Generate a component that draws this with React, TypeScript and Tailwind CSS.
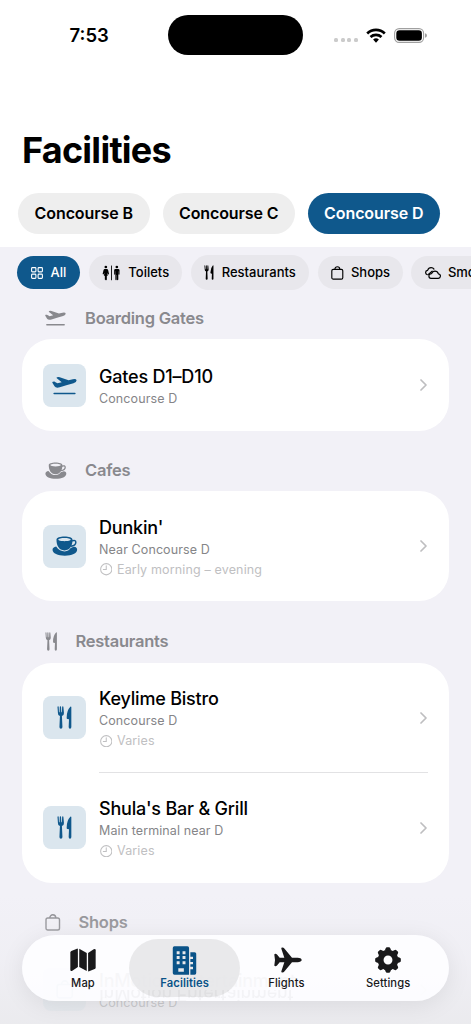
import React from "react";
import { clsx } from "clsx";

type IconProps = { className?: string };

const GridIcon = ({ className }: IconProps) => (
  <svg viewBox="0 0 12 12" className={className} fill="none" stroke="currentColor" strokeWidth="1.1">
    <rect x="0.6" y="0.6" width="4.3" height="4.3" rx="0.8" />
    <rect x="7.1" y="0.6" width="4.3" height="4.3" rx="0.8" />
    <rect x="0.6" y="7.1" width="4.3" height="4.3" rx="0.8" />
    <rect x="7.1" y="7.1" width="4.3" height="4.3" rx="0.8" />
  </svg>
);

const ToiletIcon = ({ className }: IconProps) => (
  <svg viewBox="308 434 54 48" className={className} fill="currentColor">
    <circle cx="319.500" cy="440" r="4" />
    <path d="M316.500 446h6q3 0 4 4l2.500 10q0 3-3 2l-2.500-5 2 9h-3v11q0 3-1.500 3t-1.500-3q0 3-1.500 3t-1.500-3v-11h-3l2-9-2.500 5q-3 1-3-2l2.500-10q1-4 4-4z" />
    <rect x="335.200" y="435" width="2.600" height="45" rx="1.300" />
    <circle cx="352.500" cy="440" r="4" />
    <path d="M348.500 446h8q4 0 4 4v11q0 2-1.500 2t-1.500-2v-8h-.6v24q0 3-2 3t-2-3v-13h-.8v13q0 3-2 3t-2-3v-24h-.6v8q0 2-1.500 2t-1.500-2v-11q0-4 4-4z" />
  </svg>
);

const ForkKnifeIcon = ({ className }: IconProps) => (
  <svg viewBox="171 259 45 69" className={className} fill="currentColor">
    <path d="M172.500 263q0-3 1.800-3t1.900 3l.8 15h1.800l.5-15q0-3 2-3t2 3l.5 15h1.800l.8-15q.2-3 2-3t1.900 3l1.500 17q.5 7-6 9l1.500 33q0 5-4.500 5t-4.500-5l1.500-33q-6.500-2-6-9z" />
    <path d="M211 261q3-2 3 2v59q0 5-4 5t-4-5l1-23-5-1q-2-.5-2-4 0-22 11-33z" />
  </svg>
);

const BagIcon = ({ className }: IconProps) => (
  <svg viewBox="0 0 16 17" className={className} fill="none" stroke="currentColor" strokeWidth="1.400">
    <rect x="1" y="4" width="13.500" height="12" rx="1.800" />
    <path d="M4.800 4a3 3.200 0 0 1 6 0" />
  </svg>
);

const SmokeIcon = ({ className }: IconProps) => (
  <svg viewBox="0 0 16 12" className={className} fill="none" stroke="currentColor" strokeWidth="1.200" strokeLinecap="round" strokeLinejoin="round">
    <path d="M6 11.300h7a2.200 2.200 0 0 0 .4-4.400C12.800 5 11.600 4.100 10 4.100c-1.700 0-2.900 1-3.400 2.500C5 6.500 3.900 7.600 3.900 9c0 1.300.9 2.300 2.100 2.300z" />
    <path d="M2.300 7.700C1.200 7.300.6 6.500.6 5.500c0-1.200.9-2 2-2.100C3.200 1.600 4.500.6 6.100.6c1.300 0 2.300.5 2.900 1.500" />
    <path d="M3.300 7.400l3.800-3.200" />
  </svg>
);

const DepartureIcon = ({ className }: IconProps) => (
  <svg viewBox="156 240 76 58" className={className} fill="currentColor">
    <path d="M157.500 261.500q-2-3 1-4l4-.5q2 0 4 2l6 3.500 13-3.500-15-12q-2-2 1-3l4-1q2 0 4 1l27 9 13-3q10-2 11.500 3 0 6-9.500 9l-22 6.500-20 6q-12 3-16-3z" />
    <rect x="160" y="291" width="68" height="5" rx="2.500" />
  </svg>
);

const CupIcon = ({ className }: IconProps) => (
  <svg viewBox="155 257 78 61" className={className} fill="currentColor">
    <path
      fillRule="evenodd"
      d="M168 268c0-6 11-9.500 24.500-9.500S217 262 217 268c0 18-7 33-24.500 33S168 286 168 268zm24.500-5c-10 0-19 2-19 5s9 5 19 5 19-2 19-5-9-5-19-5z"
    />
    <path d="M215 272c8-3 12-1 12 4 0 7-6 11-15 12" fill="none" stroke="currentColor" strokeWidth="4.500" />
    <path d="M167 289c-7 1-11 5-11 10 0 11 16 18 37.500 18S231 310 231 299c0-5-3-8-9-9-4 1-7 3-10 3-5 7-11 11-19 11-10 0-19-5-26-15z" />
  </svg>
);

const ClockIcon = ({ className }: IconProps) => (
  <svg viewBox="0 0 12 12" className={className} fill="none" stroke="currentColor" strokeWidth="1">
    <circle cx="6" cy="6" r="5.400" />
    <path d="M6 2.600V6.200H3.200" strokeLinecap="round" />
  </svg>
);

const ChevronIcon = ({ className }: IconProps) => (
  <svg viewBox="0 0 7 12" className={className} fill="none" stroke="currentColor" strokeWidth="1.700" strokeLinecap="round" strokeLinejoin="round">
    <path d="M1 1l5 5-5 5" />
  </svg>
);

const MapIcon = ({ className }: IconProps) => (
  <svg viewBox="207 175 79 73" className={className} fill="currentColor">
    <path d="M208 189q0-3 3-5l17-7q3-1 3 1v55l-17 11q-6 3-6-3z" />
    <path d="M235 177l23 13v55l-23-12z" />
    <path d="M262 190l17-11q6-3 6 3v52q0 3-3 5l-17 7q-3 1-3-1z" />
  </svg>
);

const BuildingIcon = ({ className }: IconProps) => (
  <svg viewBox="516 167 74 89" className={className} fill="currentColor" fillRule="evenodd">
    <path d="M522 168h40q5 0 5 5v82h-45q-5 0-5-5v-77q0-5 5-5zm7 15v9h9v-9zm18 0v9h9v-9zm-18 15v9h9v-9zm18 0v9h9v-9zm-18 16v9h9v-9zm18 0v9h9v-9zm-13 21v11h17v-11z" />
    <path d="M571 186h13q5 0 5 5v59q0 5-5 5h-13v-17h8v-7h-8v-8h8v-7h-8v-9h8v-7h-8z" />
  </svg>
);

const PlaneIcon = ({ className }: IconProps) => (
  <svg viewBox="129 173 84 77" className={className} fill="currentColor">
    <path d="M212 211.500c0 4-6 6.500-12 6.500h-17l-23 28q-2 3-6 3-4 0-3-4l9-27h-14l-8 10q-2 2-5 2-3 0-3-3l2-15.500-2-15.500q0-3 3-3t5 2l8 10h14l-9-27q-1-4 3-4t6 3l23 28h17c6 0 12 2.500 12 6.500z" />
  </svg>
);

const GearIcon = ({ className }: IconProps) => (
  <svg viewBox="-39.500 -39.500 79 79" className={className}>
    <circle r="22.500" fill="none" stroke="currentColor" strokeWidth="18" />
    {[0, 45, 90, 135, 180, 225, 270, 315].map((deg) => (
      <path key={deg} transform={`rotate(${deg})`} fill="currentColor" d="M-10-28l3-8q1-3 4-3h6q3 0 4 3l3 8z" />
    ))}
  </svg>
);

const StatusBar = () => (
  <div className="flex h-[70px] items-center pl-[69.500px]">
    <span className="w-[98.500px] shrink-0 pt-[2px] text-[18.500px] font-semibold">7:53</span>
    <div className="h-[39.500px] w-[134.500px] shrink-0 rounded-full bg-black" />
    <div className="ml-[31.500px] flex shrink-0 items-center">
      <div className="mt-[10px] flex gap-[2.500px]">
        {[0, 1, 2, 3].map((i) => (
          <span key={i} className="size-[4px] rounded-[1.500px] bg-[#cbcbcb]" />
        ))}
      </div>
      <svg viewBox="0 0 20 15" className="ml-[8px] h-[15px] w-[20px]" fill="none" stroke="black" strokeWidth="2.700">
        <path d="M1.200 5.400a12.800 12.800 0 0 1 17.600 0" />
        <path d="M4.500 9a8.300 8.300 0 0 1 11 0" />
        <path d="M7.100 11.600a4.400 4.400 0 0 1 5.800 0L10 14.700z" fill="black" stroke="none" />
      </svg>
      <svg viewBox="0 0 33 15" className="ml-[8px] h-[15px] w-[33px]">
        <rect x="0.600" y="0.600" width="29" height="13.800" rx="4.600" fill="none" stroke="#a0a0a0" strokeWidth="1.100" />
        <rect x="2.300" y="2.300" width="25.600" height="10.400" rx="3.200" />
        <path d="M31 5.200q2 .6 2 2.300t-2 2.300z" fill="#a0a0a0" />
      </svg>
    </div>
  </div>
);

const concourses = ["Concourse B", "Concourse C", "Concourse D"];

const filters = [
  { label: "All", icon: GridIcon, iconClass: "h-[12px] w-[12px]", box: "h-[33px] w-[63px] gap-[8px]" },
  { label: "Toilets", icon: ToiletIcon, iconClass: "h-[16px] w-[18px]", box: "h-[35px] w-[93.500px] gap-[8px] pl-[1px]" },
  { label: "Restaurants", icon: ForkKnifeIcon, iconClass: "h-[15px] w-[10px]", box: "h-[35px] w-[118.500px] gap-[8px]" },
  { label: "Shops", icon: BagIcon, iconClass: "h-[14px] w-[13px]", box: "h-[33px] w-[85px] gap-[7px] pl-[1px]" },
  { label: "Smoking", icon: SmokeIcon, iconClass: "h-[12px] w-[16px]", box: "h-[33px] w-[104px] gap-[7px] pl-[1px]" },
];

type Place = { name: string; place: string; hours?: string };

const sections: {
  title: string;
  icon: React.FC<IconProps>;
  headerIcon: string;
  tileIcon: string;
  gap: string;
  places: Place[];
}[] = [
  {
    title: "Boarding Gates",
    icon: DepartureIcon,
    headerIcon: "h-[16px] w-[21px] mr-[19.500px]",
    tileIcon: "h-[19px] w-[25px]",
    gap: "mt-[7px]",
    places: [{ name: "Gates D1–D10", place: "Concourse D" }],
  },
  {
    title: "Cafes",
    icon: CupIcon,
    headerIcon: "h-[17px] w-[22px] mr-[18.500px]",
    tileIcon: "h-[20px] w-[26px]",
    gap: "mt-[18px]",
    places: [{ name: "Dunkin'", place: "Near Concourse D", hours: "Early morning – evening" }],
  },
  {
    title: "Restaurants",
    icon: ForkKnifeIcon,
    headerIcon: "h-[19px] w-[12.500px] mr-[18.500px]",
    tileIcon: "h-[23px] w-[15px]",
    gap: "mt-[19.500px]",
    places: [
      { name: "Keylime Bistro", place: "Concourse D", hours: "Varies" },
      { name: "Shula's Bar & Grill", place: "Main terminal near D", hours: "Varies" },
    ],
  },
  {
    title: "Shops",
    icon: BagIcon,
    headerIcon: "h-[17px] w-[16px] mr-[18px]",
    tileIcon: "h-[19px] w-[18px]",
    gap: "mt-[19px]",
    places: [{ name: "InMotion Entertainment", place: "Concourse D" }],
  },
];

const PlaceRow = ({ item, icon: Icon, tileIcon }: { item: Place; icon: React.FC<IconProps>; tileIcon: string }) => (
  <div className={clsx("flex items-center pr-[22px] pl-[21px]", item.hours ? "h-[110px]" : "h-[92px]")}>
    <div className="flex size-[43px] shrink-0 items-center justify-center rounded-[8px] bg-[#dbe6ee] text-[#0f588c]">
      <Icon className={tileIcon} />
    </div>
    <div className="ml-[13px] flex-1">
      <h3 className="pt-[2px] text-[18px] leading-[25px] font-medium tracking-[-0.2px] text-black">{item.name}</h3>
      <p className="text-[12.500px] leading-[20px] tracking-[0.1px] text-[#858588]">{item.place}</p>
      {item.hours && (
        <p className="flex items-center gap-[5px] text-[12.500px] leading-[20px] tracking-[0.15px] text-[#c0c0c2]">
          <ClockIcon className="ml-[0.500px] size-[12.500px]" />
          {item.hours}
        </p>
      )}
    </div>
    <ChevronIcon className="h-[12px] w-[7px] text-[#bebec0]" />
  </div>
);

const tabs = [
  { label: "Map", icon: MapIcon, iconClass: "h-[24px] w-[26px]" },
  { label: "Facilities", icon: BuildingIcon, iconClass: "h-[29px] w-[25px]" },
  { label: "Flights", icon: PlaneIcon, iconClass: "ml-[3px] h-[26px] w-[28px]" },
  { label: "Settings", icon: GearIcon, iconClass: "h-[26px] w-[26px]" },
];

export default function App() {
  return (
    <div className="relative h-[1024px] w-[471px] overflow-hidden bg-[#f2f1f7] font-['Inter',sans-serif] text-black">
      <header className="h-[246.500px] bg-white">
        <StatusBar />
        <h1 className="mt-[58px] ml-[22px] text-[36px] leading-[44px] font-bold tracking-[-0.750px]">Facilities</h1>
        <div className="mt-[21px] ml-[17.500px] flex gap-[12.500px]">
          {concourses.map((name) => (
            <button
              key={name}
              className={clsx(
                "h-[40.500px] w-[132.500px] shrink-0 rounded-full text-[16px] font-[570] tracking-[-0.1px]",
                name === "Concourse D" ? "bg-[#0f588c] text-white" : "bg-[#eeeeee] text-black"
              )}
            >
              {name}
            </button>
          ))}
        </div>
      </header>

      {/* Category filters */}
      <div className="mt-[8.500px] flex h-[35px] items-center gap-[8.500px] pl-[17px]">
        {filters.map(({ label, icon: Icon, iconClass, box }) => (
          <button
            key={label}
            className={clsx(
              "flex shrink-0 items-center justify-center rounded-full text-[13px] font-[550]",
              box,
              label === "All" ? "bg-[#0f588c] text-white" : "bg-[#e8e7ec] text-black"
            )}
          >
            <Icon className={iconClass} />
            {label}
          </button>
        ))}
      </div>

      <main className="px-[22px]">
        {sections.map((section) => (
          <section key={section.title} className={section.gap}>
            <div className="flex h-[42px] items-center pl-[22.500px] text-[#89898e]">
              <section.icon className={section.headerIcon} />
              <h2 className="text-[16.500px] font-[560] tracking-[-0.250px]">{section.title}</h2>
            </div>
            <div className={clsx("rounded-[30px]", section.title !== "Shops" && "bg-white")}>
              {section.places.map((item, i) => (
                <React.Fragment key={item.name}>
                  {i > 0 && <div className="-mt-px mr-[21px] ml-[77px] h-px bg-[#e2e2e4]" />}
                  <PlaceRow item={item} icon={section.icon} tileIcon={section.tileIcon} />
                </React.Fragment>
              ))}
            </div>
          </section>
        ))}
      </main>

      {/* Content fades out under the floating tab bar */}
      <div className="absolute inset-x-0 bottom-0 h-[130px] bg-gradient-to-b from-[#ececf0]/0 via-[#ececf0]/40 to-[#e9e9ec]/80" />

      <nav className="absolute bottom-[23px] left-[22px] flex h-[66px] w-[427px] items-center overflow-hidden rounded-full bg-[#fdfdff]/95 pl-[5.500px] shadow-[0_4px_24px_rgba(0,0,0,0.08)]">
        {/* Refraction of the row title along the glass edge */}
        <span
          aria-hidden
          className="absolute top-[55px] left-[77px] h-[11px] -scale-y-100 overflow-hidden text-[18px] leading-[13px] font-medium tracking-[-0.3px] text-black/[0.035] blur-[0.600px]"
        >
          InMotion Entertainment
        </span>
        {tabs.map(({ label, icon: Icon, iconClass }) => (
          <button
            key={label}
            className={clsx(
              "-mr-[9.300px] flex h-[58px] w-[111px] shrink-0 flex-col items-center rounded-full pt-[6px] text-[11.200px] leading-[14px] font-medium tracking-[0.1px]",
              label === "Facilities" ? "bg-[#e5e5e7]/85 font-semibold text-[#0a5388]" : "text-[#19191b]"
            )}
          >
            <span className="flex h-[30px] items-center">
              <Icon className={iconClass} />
            </span>
            <span className="mt-[0.500px]">{label}</span>
          </button>
        ))}
      </nav>
    </div>
  );
}
